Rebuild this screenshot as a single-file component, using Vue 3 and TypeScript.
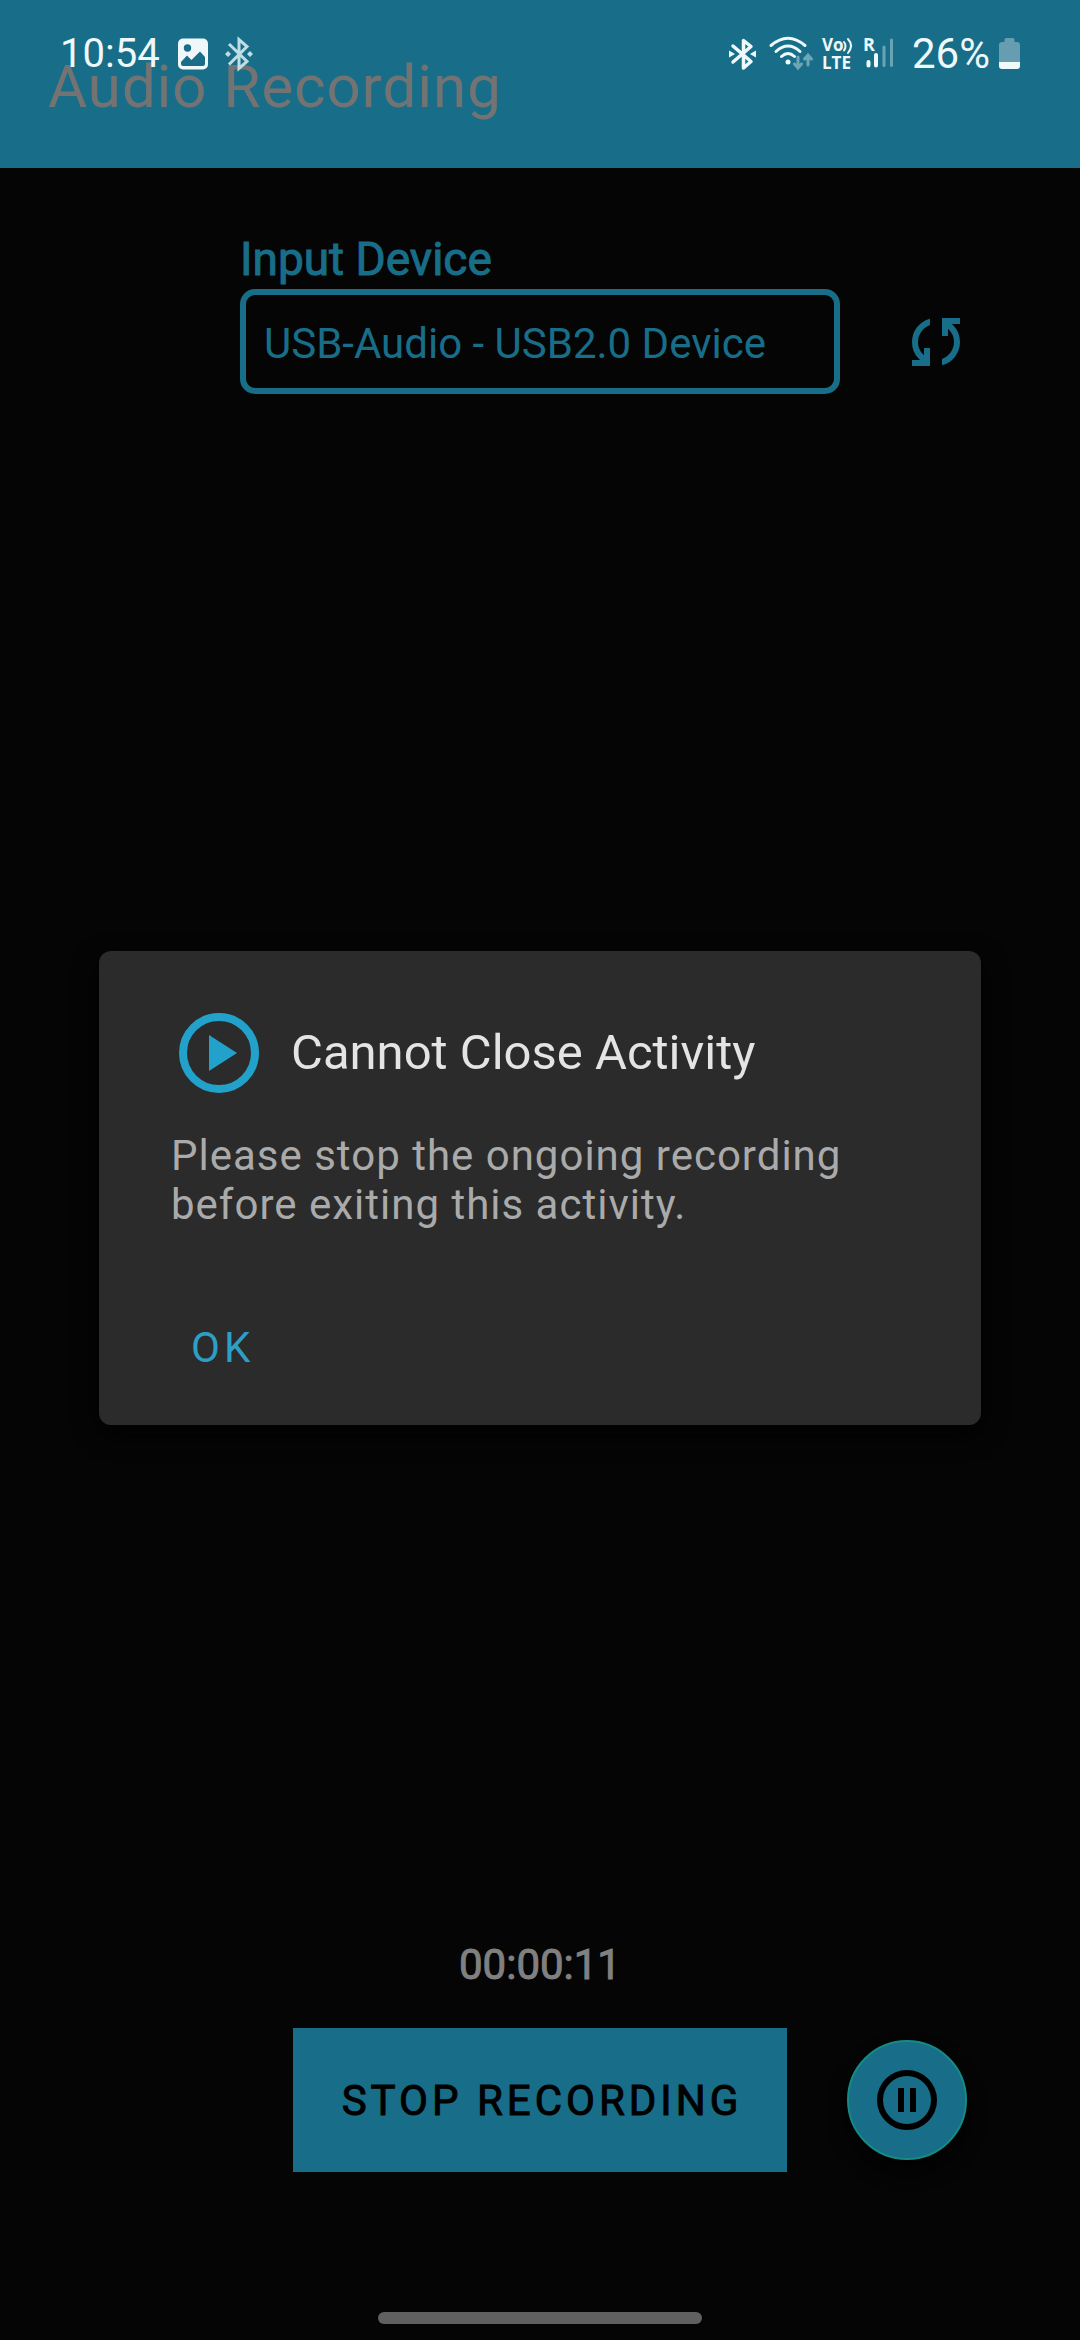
<script setup lang="ts">
import { ref } from 'vue'

const devices: string[] = ['USB-Audio - USB2.0 Device']
const device = ref<string>(devices[0])
const elapsed = ref<string>('00:00:11')
const batteryLevel = ref<string>('26%')
const clock = ref<string>('10:54')
</script>

<template>
  <div class="screen">
    <header class="app-bar">
      <h1 class="app-title">Audio Recording</h1>
      <div class="status-bar">
        <div class="status-group">
          <span class="status-text clock">{{ clock }}</span>
          <svg class="picture-icon" width="30" height="32" viewBox="0 0 30 32" aria-hidden="true">
            <path fill="#f0f7fa" fill-rule="evenodd" d="M5 0.500h20a5 5 0 0 1 5 5v21a5 5 0 0 1-5 5H5a5 5 0 0 1-5-5v-21a5 5 0 0 1 5-5zM9.500 6.300a3.700 3.700 0 1 0 0 7.400 3.700 3.700 0 0 0 0-7.400zM3 24v2a2 2 0 0 0 2 2h20a2 2 0 0 0 2-2v-7l-5-5.500-8.500 8.500-4.500-4.500z" />
          </svg>
          <svg class="bt-icon" width="30" height="34" viewBox="0 0 30 34" aria-hidden="true">
            <path fill="none" stroke="#bfdde5" stroke-width="3" d="M5 7l18 17.500-8 7V2.500l8 7L5 27.500" />
            <path fill="#bfdde5" d="M4 14l3 3-3 3-3-3zM26 14l3 3-3 3-3-3z" />
          </svg>
        </div>
        <div class="status-group">
          <svg class="bt-status" width="27" height="34" viewBox="0 0 27 34" aria-hidden="true">
            <path fill="none" stroke="#eef9fc" stroke-width="3.500" stroke-linejoin="round" stroke-linecap="round" d="M4 9l18 15.500-7.500 6.500V3.500L22 9.500 4 25" />
            <path fill="#eef9fc" d="M0 13.500l6 3.500-6 3.500zM27 13.500L21 17l6 3.500z" />
          </svg>
          <svg class="wifi-icon" width="44" height="36" viewBox="0 0 44 36" aria-hidden="true">
            <g fill="none" stroke="#eef9fc" stroke-width="3" stroke-linecap="round">
              <path d="M2 9.500Q19 -5 36 9.500" />
              <path d="M7 15.500Q19 4.500 31 15.500" />
              <path d="M12.500 20.500Q19 14.500 25.500 20.500" />
            </g>
            <circle cx="19" cy="26" r="2.500" fill="#eef9fc" />
            <path fill="none" stroke="#6fa6b7" stroke-width="3" stroke-linecap="round" d="M29 21v10M25.500 28l3.500 4 3.500-4M39 29V19M35.500 23l3.500-4 3.500 4" />
          </svg>
          <svg class="volte-icon" width="32" height="36" viewBox="0 0 32 36" aria-hidden="true">
            <g fill="#eef9fc" font-family="'Open Sans', sans-serif" font-weight="700" font-size="17">
              <text x="0" y="15">Vo</text>
              <text x="0" y="33">LTE</text>
            </g>
            <path fill="none" stroke="#eef9fc" stroke-width="2" stroke-linecap="round" d="M22 6q3 4 0 8.500M26 3q6 6.500 0 14" />
          </svg>
          <svg class="signal-icon" width="31" height="36" viewBox="0 0 31 36" aria-hidden="true">
            <text x="0" y="15" fill="#eef9fc" font-family="'Open Sans', sans-serif" font-weight="700" font-size="18">R</text>
            <g fill="none" stroke-width="4" stroke-linecap="round">
              <path stroke="#eef9fc" d="M5.500 26v3.500M13 19v10.500" />
              <path stroke="#6aa3b5" stroke-width="3" d="M21 11v18.500M28.500 4v25.500" />
            </g>
          </svg>
          <span class="status-text battery-text">{{ batteryLevel }}</span>
          <svg class="battery-icon" width="21" height="32" viewBox="0 0 21 32" aria-hidden="true">
            <path fill="#669db0" d="M7 0h7a1.500 1.500 0 0 1 1.500 1.500V4H18a3 3 0 0 1 3 3v17H0V7a3 3 0 0 1 3-3h2.500V1.500A1.500 1.500 0 0 1 7 0z" />
            <path fill="#f0f9fc" d="M0 24h21v4a3 3 0 0 1-3 3H3a3 3 0 0 1-3-3z" />
          </svg>
        </div>
      </div>
    </header>

    <main class="content">
      <section class="device-grid">
        <label class="device-label" for="device">Input Device</label>
        <select id="device" v-model="device" class="device-select">
          <option v-for="name in devices" :key="name" :value="name">{{ name }}</option>
        </select>
        <button class="refresh" type="button" aria-label="Refresh devices">
          <svg width="72" height="72" viewBox="0 -960 960 960" aria-hidden="true">
            <path fill="currentColor" d="M160-160v-80h110l-16-14q-52-46-73-105t-21-119q0-111 66.500-197.500T400-790v84q-72 26-116 88.500T240-478q0 45 17 87.500t53 78.500l10 10v-98h80v240H160Zm400-10v-84q72-26 116-88.500T720-482q0-45-17-87.500T650-648l-10-10v98h-80v-240h240v80H690l16 14q49 49 71.500 106.500T800-482q0 111-66.500 197.500T560-170Z" />
          </svg>
        </button>
      </section>

      <section class="recorder">
        <output class="timer">{{ elapsed }}</output>
        <div class="controls">
          <button class="stop" type="button">STOP RECORDING</button>
          <button class="pause" type="button" aria-label="Pause recording">
            <svg width="72" height="72" viewBox="0 0 24 24" aria-hidden="true">
              <circle cx="12" cy="12" r="9" fill="none" stroke="currentColor" stroke-width="2" />
              <path fill="currentColor" d="M9 8h2v8H9zM13 8h2v8h-2z" />
            </svg>
          </button>
        </div>
      </section>
    </main>

    <div class="home-bar"></div>

    <div class="overlay">
      <div class="dialog" role="alertdialog" aria-labelledby="dialog-title" aria-describedby="dialog-text">
        <div class="dialog-head">
          <svg class="play-icon" width="96" height="96" viewBox="0 0 24 24" aria-hidden="true">
            <circle cx="12" cy="12" r="9" fill="none" stroke="currentColor" stroke-width="2" />
            <path fill="currentColor" d="M9.500 7.500l7 4.500-7 4.500z" />
          </svg>
          <h2 id="dialog-title" class="dialog-title">Cannot Close Activity</h2>
        </div>
        <p id="dialog-text" class="dialog-text">Please stop the ongoing recording before exiting this activity.</p>
        <button class="ok" type="button">OK</button>
      </div>
    </div>
  </div>
</template>

<style>
body {
  margin: 0;
  background: #050505;
}
</style>

<style scoped>
.screen {
  position: relative;
  display: flex;
  flex-direction: column;
  min-height: 100vh;
  box-sizing: border-box;
  padding-bottom: 16px;
  background: #050505;
  color: #186e88;
  font-family: Roboto, sans-serif;
}

button {
  margin: 0;
  padding: 0;
  border: 0;
  background: none;
  color: inherit;
  font-family: inherit;
}

svg {
  display: block;
  flex: none;
  overflow: visible;
}

.app-bar {
  position: relative;
  display: flex;
  align-items: center;
  height: 168px;
  box-sizing: border-box;
  padding: 6px 48px 0;
  background: #186e88;
}

.app-title {
  margin: 0;
  color: #737373;
  font-size: 60px;
  font-weight: 400;
  line-height: 72px;
  letter-spacing: 1px;
}

.status-bar {
  position: absolute;
  inset: 0 0 auto;
  display: flex;
  align-items: center;
  justify-content: space-between;
  height: 108px;
  padding: 0 60px;
}

.status-group {
  display: flex;
  align-items: center;
}

.status-text {
  color: #eef9fc;
  font-size: 40px;
  line-height: 48px;
}

.picture-icon,
.battery-text {
  margin-left: 18px;
}

.status-text.battery-text {
  font-size: 42px;
}

.bt-icon {
  margin-left: 16px;
}

.wifi-icon {
  margin-left: 13px;
}

.volte-icon,
.signal-icon,
.battery-icon {
  margin-left: 9px;
}

.content {
  display: flex;
  flex: 1;
  flex-direction: column;
  justify-content: space-between;
  padding: 64px 0 140px;
}

.device-grid {
  display: grid;
  grid-template-columns: 1fr minmax(0, 600px) 1fr;
  align-items: center;
  row-gap: 3px;
}

.device-label,
.timer {
  line-height: 54px;
  -webkit-text-stroke: 1px currentColor;
}

.device-label {
  grid-column: 2;
  font-size: 46px;
}

.device-select {
  grid-column: 2;
  width: 100%;
  height: 105px;
  box-sizing: border-box;
  padding: 3px 18px 0;
  border: 6px solid #186e88;
  border-radius: 15px;
  appearance: none;
  background: transparent;
  color: #186e88;
  font-family: inherit;
  font-size: 42px;
}

.refresh {
  grid-column: 3;
  justify-self: start;
  margin-left: 60px;
}

.recorder {
  display: flex;
  flex-direction: column;
  gap: 36px;
}

.timer {
  color: #808080;
  font-size: 42px;
  text-align: center;
}

.controls {
  display: grid;
  grid-template-columns: 1fr auto 1fr;
  align-items: center;
}

.stop {
  grid-column: 2;
  min-width: 494px;
  height: 144px;
  padding: 0 44px 0 48px;
  background: #186e88;
  color: #000;
  font-size: 42px;
  letter-spacing: 4px;
  -webkit-text-stroke: 1px currentColor;
}

.pause {
  display: flex;
  align-items: center;
  justify-content: center;
  justify-self: start;
  width: 120px;
  height: 120px;
  margin-left: 60px;
  border: 2px solid #168a85;
  border-radius: 50%;
  background: #186e88;
  color: #000;
  box-shadow: 0 12px 18px #020202;
}

.home-bar {
  align-self: center;
  width: 30%;
  height: 12px;
  border-radius: 6px;
  background: #606060;
}

.overlay {
  position: absolute;
  inset: 0;
  display: flex;
  align-items: center;
  padding: 36px 99px 0;
}

.dialog {
  display: flex;
  flex: 1;
  flex-direction: column;
  align-items: flex-start;
  padding: 54px 72px 30px;
  border-radius: 12px;
  background: #2b2b2b;
  box-shadow: 0 9px 24px #020202;
}

.dialog-head {
  display: flex;
  align-items: center;
  gap: 24px;
}

.play-icon {
  color: #22a2cb;
}

.dialog-title {
  margin: 0;
  color: #e4e4e4;
  font-size: 49px;
  font-weight: 400;
  line-height: 56px;
}

.dialog-text {
  margin: 30px 0 0;
  color: #aaa;
  font-size: 42px;
  line-height: 49px;
  letter-spacing: 1px;
}

.ok {
  height: 96px;
  margin-top: 70px;
  padding: 0 20px;
  color: #2d9fc5;
  font-size: 42px;
  letter-spacing: 4px;
}
</style>
